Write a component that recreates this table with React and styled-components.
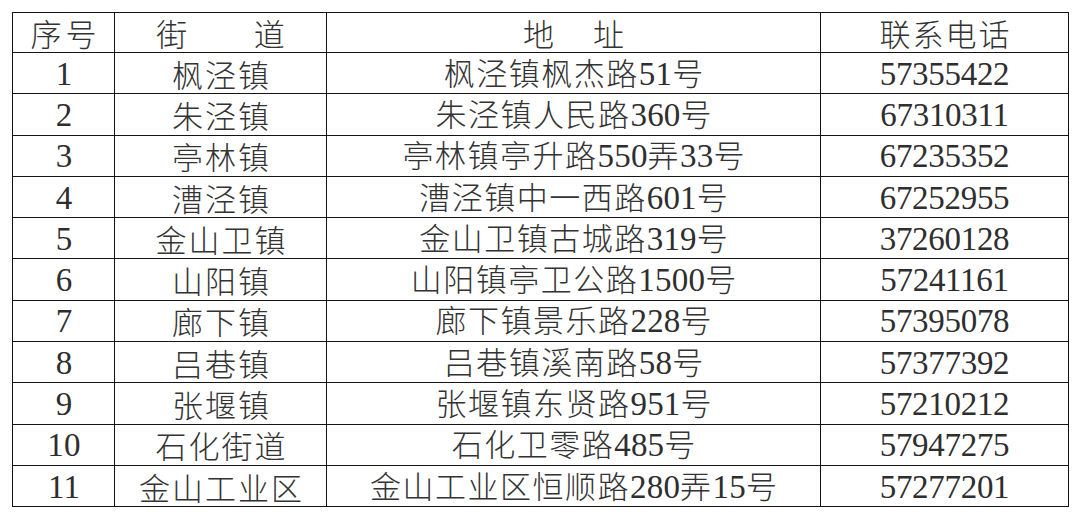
import React from "react";
import styled, { createGlobalStyle } from "styled-components";

const GlobalStyle = createGlobalStyle`
  html, body { margin: 0; padding: 0; background: #ffffff; }
  body { font-family: "Liberation Serif", "Noto Sans CJK SC", serif; }
`;

const Page = styled.div`
  padding: 12px 0 0 12px;
  width: 1080px;
  height: 519px;
  box-sizing: border-box;
  background: #fff;
`;

const Table = styled.table`
  border-collapse: collapse;
  width: 1056px;
  table-layout: fixed;
  color: #333333;
  font-family: "Noto Sans CJK SC", "Liberation Serif", sans-serif;
  font-size: 31px;
  font-weight: 300;
  line-height: 1;
`;

const Col = styled.col`
  width: ${(p) => p.$w}px;
`;

const Row = styled.tr`
  height: ${(p) => (p.$head ? 40 : 41.3)}px;
`;

const Cell = styled.td`
  border: 1.6px solid #141414;
  padding: 0 0 0 ${(p) => p.$ls}px;
  text-align: center;
  vertical-align: middle;
  white-space: nowrap;
  letter-spacing: ${(p) => p.$ls}px;
`;

const Num = styled.span`
  font-family: "Liberation Serif", serif;
  font-weight: 400;
  font-size: 33px;
  letter-spacing: ${(p) => (p.$wide ? 0.2 : -0.3)}px;
  color: #2e2e2e;
`;

const rows = [
  ["1", "枫泾镇", "枫泾镇枫杰路51号", "57355422"],
  ["2", "朱泾镇", "朱泾镇人民路360号", "67310311"],
  ["3", "亭林镇", "亭林镇亭升路550弄33号", "67235352"],
  ["4", "漕泾镇", "漕泾镇中一西路601号", "67252955"],
  ["5", "金山卫镇", "金山卫镇古城路319号", "37260128"],
  ["6", "山阳镇", "山阳镇亭卫公路1500号", "57241161"],
  ["7", "廊下镇", "廊下镇景乐路228号", "57395078"],
  ["8", "吕巷镇", "吕巷镇溪南路58号", "57377392"],
  ["9", "张堰镇", "张堰镇东贤路951号", "57210212"],
  ["10", "石化街道", "石化卫零路485号", "57947275"],
  ["11", "金山工业区", "金山工业区恒顺路280弄15号", "57277201"],
];

function Mixed({ text, wide }) {
  return text
    .split(/(\d+)/)
    .filter(Boolean)
    .map((part, i) =>
      /^\d+$/.test(part) ? (
        <Num key={i} $wide={wide}>
          {part}
        </Num>
      ) : (
        <React.Fragment key={i}>{part}</React.Fragment>
      )
    );
}

export default function App() {
  return (
    <Page>
      <GlobalStyle />
      <Table>
        <colgroup>
          <Col $w={102} />
          <Col $w={212} />
          <Col $w={494} />
          <Col $w={248} />
        </colgroup>
        <tbody>
          <Row $head>
            <Cell $ls={4}>序号</Cell>
            <Cell $ls={1.5}>街　　道</Cell>
            <Cell $ls={4}>地　址</Cell>
            <Cell $ls={2}>联系电话</Cell>
          </Row>
          {rows.map((r) => (
            <Row key={r[0]}>
              <Cell $ls={1}>
                <Mixed text={r[0]} wide />
              </Cell>
              <Cell $ls={2}>{r[1]}</Cell>
              <Cell $ls={1.5}>
                <Mixed text={r[2]} wide />
              </Cell>
              <Cell $ls={0}>
                <Mixed text={r[3]} />
              </Cell>
            </Row>
          ))}
        </tbody>
      </Table>
    </Page>
  );
}
